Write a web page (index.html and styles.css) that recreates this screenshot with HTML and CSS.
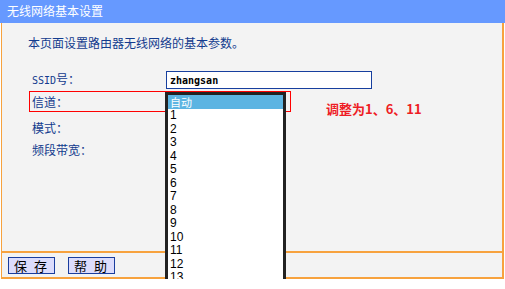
FILE: index.html
```html
<!DOCTYPE html>
<html lang="zh-CN">
<head>
    <meta charset="UTF-8">
    <title>无线网络基本设置</title>
    <link rel="stylesheet" href="styles.css">
</head>
<body>
    <div class="title">无线网络基本设置</div>
    <div class="panel">
        <p class="intro">本页面设置路由器无线网络的基本参数。</p>

        <div class="row">
            <span class="label"><span class="ascii">SSID</span>号：</span>
            <input class="text-input" type="text" value="zhangsan">
        </div>

        <div class="channel-line">
            <div class="channel-box">
                <span class="label">信道：</span>
                <ul class="popup">
                    <li class="selected">自动</li>
                    <li>1</li>
                    <li>2</li>
                    <li>3</li>
                    <li>4</li>
                    <li>5</li>
                    <li>6</li>
                    <li>7</li>
                    <li>8</li>
                    <li>9</li>
                    <li>10</li>
                    <li>11</li>
                    <li>12</li>
                    <li>13</li>
                </ul>
            </div>
            <span class="note">调整为1、6、11</span>
        </div>

        <div class="row tall">
            <span class="label">模式：</span>
        </div>
        <div class="row tall">
            <span class="label">频段带宽：</span>
        </div>
    </div>
    <div class="footer">
        <button class="btn">保 存</button>
        <button class="btn">帮 助</button>
    </div>
</body>
</html>
```

FILE: styles.css
```css
html {
    overflow: hidden;
}
body {
    margin: 0;
    background-color: white;
    font-family: "Noto Sans CJK SC", sans-serif;
    font-size: 12px;
    color: #123b8e;
}
.title {
    height: 23px;
    line-height: 22px;
    padding-left: 7px;
    background-color: #6699ff;
    color: white;
}
.panel {
    margin: 0 1px;
    height: 228px;
    background-color: #f3f3f3;
    border-left: 1px solid #f7a23e;
    border-right: 2px solid #f7a23e;
    border-bottom: 2px solid #f7a23e;
}
.intro {
    margin: 0;
    padding: 12px 0 0 26px;
    line-height: 16px;
    height: 16px;
}
.row {
    display: flex;
    align-items: center;
    height: 18px;
    margin-top: 20px;
    padding-left: 30px;
}
.row.tall {
    height: 22px;
    margin-top: 0;
}
.label {
    width: 134px;
    line-height: 16px;
}
.ascii {
    font-family: "DejaVu Sans Mono", monospace;
    font-size: 10px;
}
.text-input {
    width: 206px;
    height: 18px;
    box-sizing: border-box;
    margin: 0;
    padding: 0 0 0 3px;
    border: 1px solid #173f9e;
    background-color: white;
    font-family: "DejaVu Sans Mono", monospace;
    font-size: 10px;
    font-weight: bold;
    color: black;
}
.channel-line {
    display: flex;
    margin-top: 2px;
}
.channel-box {
    position: relative;
    display: flex;
    align-items: center;
    width: 258px;
    height: 19px;
    margin-left: 27px;
    padding-left: 2px;
    border: 1px solid red;
}
.popup {
    position: absolute;
    top: 0;
    left: 135px;
    z-index: 2;
    box-sizing: border-box;
    width: 121px;
    height: 195px;
    overflow: hidden;
    margin: 0;
    padding: 0;
    list-style: none;
    background-color: white;
    border: 3px solid #222222;
    font-family: "Liberation Sans", Arial, sans-serif;
    font-size: 12px;
    color: black;
}
.popup li {
    height: 13.5px;
    line-height: 13.5px;
    padding-left: 2px;
    overflow: hidden;
}
.popup li.selected {
    height: 14px;
    line-height: 14px;
    background-color: #5cb4e2;
    color: white;
    font-family: "Noto Sans CJK SC", sans-serif;
    font-size: 11px;
}
.note {
    margin: 10px 0 0 35px;
    line-height: 16px;
    font-size: 13px;
    font-weight: bold;
    color: #ee1c25;
}
.footer {
    margin: 0 1px;
    height: 24px;
    display: flex;
    align-items: center;
    gap: 13px;
    padding-left: 6px;
    background-color: #f3f3f3;
    border-left: 1px solid #f7a23e;
    border-right: 2px solid #f7a23e;
    border-bottom: 2px solid #f7a23e;
}
.btn {
    width: 47px;
    height: 17px;
    padding: 0;
    background-color: #dcdcfc;
    border: 1px solid #1a3d9e;
    font-family: "Noto Sans CJK SC", sans-serif;
    font-size: 13px;
    line-height: 15px;
    letter-spacing: 2px;
    color: black;
}
```
